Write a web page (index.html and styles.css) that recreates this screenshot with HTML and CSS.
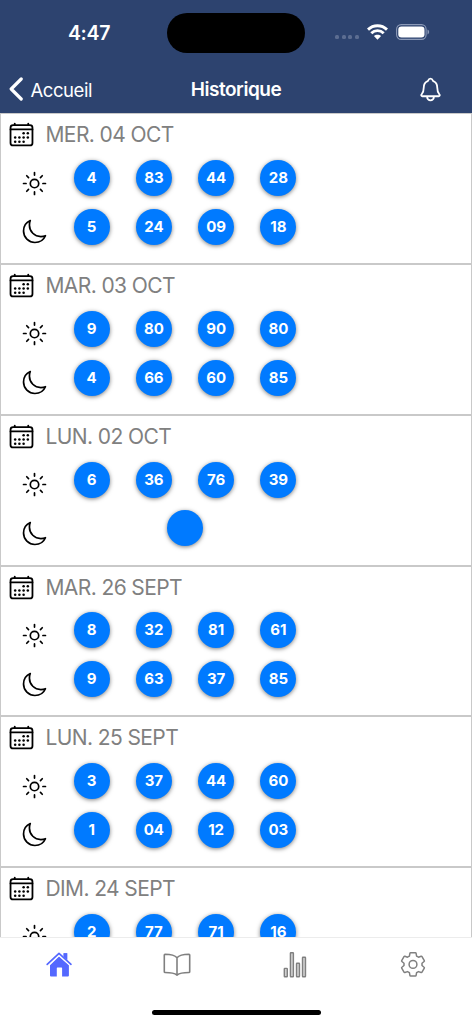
FILE: index.html
```
<!DOCTYPE html>
<html lang="fr">
<head>
<meta charset="utf-8">
<title>Historique</title>
<link rel="stylesheet" href="styles.css">
</head>
<body>
<svg class="defs" aria-hidden="true">
  <symbol id="calendar" viewBox="0 0 512 512">
    <g fill="none" stroke="currentColor" stroke-width="34" stroke-linejoin="round"><rect x="48" y="80" width="416" height="384" rx="48"/><path d="M128 48v32M384 48v32M464 160H48" stroke-linecap="round"/></g>
    <g fill="currentColor"><circle cx="296" cy="232" r="24"/><circle cx="376" cy="232" r="24"/><circle cx="296" cy="312" r="24"/><circle cx="376" cy="312" r="24"/><circle cx="136" cy="312" r="24"/><circle cx="216" cy="312" r="24"/><circle cx="136" cy="392" r="24"/><circle cx="216" cy="392" r="24"/><circle cx="296" cy="392" r="24"/></g>
  </symbol>
  <symbol id="sun" viewBox="0 0 512 512">
    <g fill="none" stroke="currentColor" stroke-width="32" stroke-linecap="round"><path d="M256 48v48M256 416v48M403.08 108.92l-33.94 33.94M142.86 369.14l-33.94 33.94M464 256h-48M96 256H48M403.08 403.08l-33.94-33.94M142.86 142.86l-33.94-33.94"/><circle cx="256" cy="256" r="80"/></g>
  </symbol>
  <symbol id="moon" viewBox="0 0 512 512">
    <path fill="none" stroke="currentColor" stroke-width="32" stroke-linejoin="round" stroke-linecap="round" d="M160 136c0-30.62 4.51-61.61 16-88C99.57 81.27 48 159.32 48 248c0 119.29 96.71 216 216 216 88.68 0 166.73-51.57 200-128-26.39 11.49-57.38 16-88 16-119.29 0-216-96.71-216-216z"/>
  </symbol>
</svg>
<div class="screen">
  <header class="header">
    <div class="status">
      <span class="time">4:47</span>
      <span class="island"></span>
      <div class="signals">
        <span class="dots"><i></i><i></i><i></i><i></i></span>
        <svg class="wifi" viewBox="0 0 21 16"><path fill="none" stroke="#fff" stroke-width="2.9" d="M1 5.6C6.3.4 14.7.4 20 5.6M4.3 9.2c3.5-3.4 8.9-3.4 12.4 0"/><path fill="#fff" d="M10.5 15.7 6.9 12.1c2-1.9 5.2-1.9 7.2 0z"/></svg>
        <svg class="battery" viewBox="0 0 34 16"><rect x=".6" y=".6" width="29.5" height="14.8" rx="4.6" fill="none" stroke="#8b99b7" stroke-width="1.1"/><rect x="2.3" y="2.6" width="26.2" height="10.8" rx="3.2" fill="#fff"/><path d="M31.5 5.6c2.2.8 2.2 4 0 4.800z" fill="#8b99b7"/></svg>
      </div>
    </div>
    <div class="nav">
      <div class="back"><svg viewBox="0 0 14 24"><path fill="none" stroke="#fff" stroke-width="3.2" stroke-linecap="round" stroke-linejoin="round" d="M12.2 2 2.2 12l10 10"/></svg><span>Accueil</span></div>
      <h1 class="title">Historique</h1>
      <div class="bell"><svg viewBox="0 0 512 512"><path fill="none" stroke="#fff" stroke-width="34" stroke-linecap="round" stroke-linejoin="round" d="M427.68 351.43C402 320 383.87 304 383.87 217.35 383.87 138 343.35 109.73 310 96c-4.43-1.82-8.6-6-9.95-10.55C294.2 65.54 277.8 48 256 48s-38.21 17.55-44 37.47c-1.35 4.6-5.52 8.71-9.95 10.53-33.39 13.75-73.87 41.92-73.87 121.35C128.13 304 110 320 84.32 351.43 73.68 364.45 83 384 101.61 384h308.88c18.51 0 27.77-19.61 17.19-32.57zM320 384v16a64 64 0 01-128 0v-16"/></svg></div>
    </div>
  </header>
  <main class="list">
    <section class="day">
      <h2 class="date"><svg class="icon"><use href="#calendar"/></svg><span>MER. 04 OCT</span></h2>
      <div class="draw"><svg class="icon"><use href="#sun"/></svg><div class="balls"><b>4</b><b>83</b><b>44</b><b>28</b></div></div>
      <div class="draw"><svg class="icon"><use href="#moon"/></svg><div class="balls"><b>5</b><b>24</b><b>09</b><b>18</b></div></div>
    </section>
    <section class="day">
      <h2 class="date"><svg class="icon"><use href="#calendar"/></svg><span>MAR. 03 OCT</span></h2>
      <div class="draw"><svg class="icon"><use href="#sun"/></svg><div class="balls"><b>9</b><b>80</b><b>90</b><b>80</b></div></div>
      <div class="draw"><svg class="icon"><use href="#moon"/></svg><div class="balls"><b>4</b><b>66</b><b>60</b><b>85</b></div></div>
    </section>
    <section class="day">
      <h2 class="date"><svg class="icon"><use href="#calendar"/></svg><span>LUN. 02 OCT</span></h2>
      <div class="draw"><svg class="icon"><use href="#sun"/></svg><div class="balls"><b>6</b><b>36</b><b>76</b><b>39</b></div></div>
      <div class="draw"><svg class="icon"><use href="#moon"/></svg><div class="balls"><b></b></div></div>
    </section>
    <section class="day">
      <h2 class="date"><svg class="icon"><use href="#calendar"/></svg><span>MAR. 26 SEPT</span></h2>
      <div class="draw"><svg class="icon"><use href="#sun"/></svg><div class="balls"><b>8</b><b>32</b><b>81</b><b>61</b></div></div>
      <div class="draw"><svg class="icon"><use href="#moon"/></svg><div class="balls"><b>9</b><b>63</b><b>37</b><b>85</b></div></div>
    </section>
    <section class="day">
      <h2 class="date"><svg class="icon"><use href="#calendar"/></svg><span>LUN. 25 SEPT</span></h2>
      <div class="draw"><svg class="icon"><use href="#sun"/></svg><div class="balls"><b>3</b><b>37</b><b>44</b><b>60</b></div></div>
      <div class="draw"><svg class="icon"><use href="#moon"/></svg><div class="balls"><b>1</b><b>04</b><b>12</b><b>03</b></div></div>
    </section>
    <section class="day">
      <h2 class="date"><svg class="icon"><use href="#calendar"/></svg><span>DIM. 24 SEPT</span></h2>
      <div class="draw"><svg class="icon"><use href="#sun"/></svg><div class="balls"><b>2</b><b>77</b><b>71</b><b>16</b></div></div>
    </section>
  </main>
  <footer class="footer">
    <nav class="tabs">
      <a class="tab active"><svg viewBox="0 0 28 28"><path fill="currentColor" d="M14 6.4 23.900 15.300V25.400q0 1-1 1h-5.800v-8.200q0-.6-.6-.6h-4.100q-.6 0-.6.6v8.200H6q-1 0-1-1V15.300z"/><path fill="currentColor" d="M18.600 3.200h3.600v6.500l-3.600-3.200z"/><path fill="none" stroke="#fff" stroke-width="3.200" d="M2.200 14.900 14 3.900l12 11"/><path fill="none" stroke="currentColor" stroke-width="1.700" stroke-linecap="round" stroke-linejoin="round" d="M2.200 14.300 14 3.400l12 10.900"/><path fill="currentColor" d="M18.600 3.200h3.600v7l-3.600-3.200z"/></svg></a>
      <a class="tab"><svg viewBox="0 0 28 28"><path fill="none" stroke="currentColor" stroke-width="1.600" stroke-linejoin="round" d="M14 7.700C11.600 4.800 7.200 4.200 2 4.200q-.7 0-.7.7v16.800q0 .8.8.8c4.700 0 9 .3 11.900 2.600 2.900-2.300 7.200-2.600 11.900-2.600q.8 0 .8-.8V4.900q0-.7-.7-.7c-5.200 0-9.600.6-12 3.500zV25"/></svg></a>
      <a class="tab"><svg viewBox="0 0 28 28"><g fill="#d0d0d0" stroke="currentColor" stroke-width="1.400"><rect x="3.300" y="18.400" width="3" height="8.400" rx=".5"/><rect x="9.400" y="2.700" width="3" height="24.100" rx=".5"/><rect x="15.500" y="13.200" width="3" height="13.600" rx=".5"/><rect x="21.500" y="7.200" width="3" height="19.600" rx=".5"/></g></svg></a>
      <a class="tab"><svg viewBox="0 0 28 28"><g fill="none" stroke="currentColor" stroke-width="1.500" stroke-linejoin="round"><path d="M11.600 2.800h4.800q.6 0 .7.6l.5 2.700 1.900 1.100 2.600-.9q.6-.2.9.3l2.300 4q.3.5-.2.9l-2.100 1.800v2.200l2.100 1.800q.5.4.2.9l-2.300 4q-.3.5-.9.3l-2.600-.9-1.900 1.100-.5 2.700q-.1.6-.7.6h-4.800q-.6 0-.7-.6l-.5-2.700-1.900-1.100-2.600.9q-.6.2-.9-.3l-2.300-4q-.3-.5.2-.9l2.100-1.800v-2.200l-2.100-1.800q-.5-.4-.2-.9l2.300-4q.3-.5.9-.3l2.600.9 1.900-1.100.5-2.700q.1-.6.7-.6z"/><circle cx="14" cy="14.400" r="3.900"/></g></svg></a>
    </nav>
    <div class="indicator"></div>
  </footer>
</div>
</body>
</html>
```
FILE: styles.css
```
* { box-sizing: border-box; }
body { margin: 0; font-family: Inter, "Liberation Sans", sans-serif; background: #fff; }
svg { display: block; flex: none; }
.defs { width: 0; height: 0; position: absolute; }
.screen { width: 472px; height: 1024px; display: flex; flex-direction: column; overflow: hidden; }

.header { height: 113.4px; flex: none; background: #2d436f; color: #fff; }
.status { height: 65px; display: grid; grid-template-columns: 167px 138px 167px; align-items: center; }
.time { padding-left: 11px; text-align: center; font-size: 19.5px; font-weight: 600; letter-spacing: -.3px; }
.island { height: 40px; border-radius: 20px; background: #000; }
.signals { display: flex; align-items: center; padding: 0 0 1.5px 30px; }
.dots { display: flex; gap: 2.6px; padding-top: 11px; }
.dots i { width: 4px; height: 4px; border-radius: 1.5px; background: #5c6d91; }
.wifi { width: 21px; height: 16px; margin-left: 8px; }
.battery { width: 34px; height: 16px; margin-left: 8.5px; }
.nav { height: 48.4px; display: grid; grid-template-columns: 1fr 100px 1fr; align-items: center; }
.back { display: flex; align-items: center; padding-left: 9px; gap: 7.5px; font-size: 18.5px; letter-spacing: -.45px; }
.back svg { width: 14px; height: 24px; }
.back span { padding-top: 1px; }
.title { margin: 0; padding-top: 1px; font-size: 19px; line-height: 24px; font-weight: 600; text-align: center; white-space: nowrap; letter-spacing: -.45px; }
.bell { display: flex; justify-content: flex-end; padding-right: 28px; }
.bell svg { width: 27px; height: 27px; }

.list { flex: 1; min-height: 0; overflow: hidden; }
.day { height: 150.72px; border: 1px solid #c9c9c9; padding: 7px 0 0 7px; color: #000; }
.icon { width: 27px; height: 27px; }
.date { display: flex; align-items: center; height: 27px; margin: 0 0 13px; gap: 10.5px; font-size: 21px; font-weight: 400; letter-spacing: -.6px; color: #808080; }
.date .icon { color: #000; }
.draw { display: flex; height: 48.7px; padding-left: 13px; gap: 12.5px; }
.draw .icon { margin-top: 8.3px; }
.balls { width: 249px; display: flex; justify-content: space-around; }
.balls b { width: 36px; height: 36px; margin-top: -1.3px; border-radius: 50%; background: #007aff; color: #fff; font-size: 15px; line-height: 36px; font-weight: 700; text-align: center; box-shadow: 0 1px 4px rgba(0,0,0,.5); }

.footer { height: 87px; flex: none; background: #fff; border-top: 1px solid #ececec; display: flex; flex-direction: column; align-items: center; justify-content: space-between; padding-bottom: 9px; }
.tabs { width: 100%; display: grid; grid-template-columns: repeat(4, 1fr); padding-top: 12px; }
.tab { display: flex; justify-content: center; color: #808080; }
.tab svg { width: 28px; height: 28px; }
.tab.active { color: #5468ff; }
.indicator { width: 169px; height: 5.5px; border-radius: 3px; background: #000; }
```
